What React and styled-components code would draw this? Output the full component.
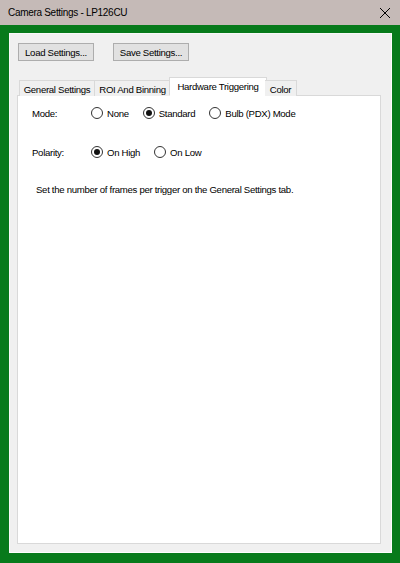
import styled, { createGlobalStyle } from 'styled-components';

const Global = createGlobalStyle`
  html, body {
    margin: 0;
    padding: 0;
    background: #f0f0f0;
  }
  body {
    font-family: 'Liberation Sans', Arial, sans-serif;
    font-size: 9.6px;
    letter-spacing: -0.3px;
    color: #000;
  }
`;

const Window = styled.div`
  width: 400px;
  height: 563px;
  display: flex;
  flex-direction: column;
`;

const TitleBar = styled.div`
  height: 25px;
  background: #c5bab7;
  display: flex;
  align-items: center;
  justify-content: space-between;
  padding: 0 9px 0 8px;
  font-size: 10px;
  letter-spacing: -0.3px;
`;

const Close = styled.span`
  display: flex;
  width: 12px;
  height: 12px;
`;

const Frame = styled.div`
  flex: 1;
  background: #077a1b;
  padding: 8px 8px 10px 9px;
  display: flex;
`;

const Client = styled.div`
  flex: 1;
  background: #f0f0f0;
  border-top: 1px solid #f8f8f8;
  border-left: 1px solid #f8f8f8;
  border-right: 1px solid #fdfdfd;
  border-bottom: 1px solid #fdfdfd;
  display: flex;
  flex-direction: column;
  padding: 9px 10px 8px 7px;
`;

const ButtonRow = styled.div`
  display: flex;
  gap: 19px;
  padding-left: 1px;
`;

const Button = styled.button`
  width: 76px;
  height: 18px;
  padding: 0;
  border: 1px solid #adadad;
  background: #e1e1e1;
  font: inherit;
  letter-spacing: inherit;
  color: #000;
  white-space: nowrap;
`;

const Tabs = styled.div`
  margin-top: 16px;
  flex: 1;
  display: flex;
  flex-direction: column;
`;

const TabList = styled.div`
  display: flex;
  align-items: flex-end;
  padding-left: 2px;
  height: 19px;
  position: relative;
  z-index: 1;
`;

const Tab = styled.div`
  height: ${(p) => (p.$active ? '19px' : '16px')};
  width: ${(p) => p.$w}px;
  box-sizing: border-box;
  border: 1px solid #d9d9d9;
  border-bottom: ${(p) => (p.$active ? '1px solid #fff' : 'none')};
  border-left: ${(p) => (p.$first || p.$active ? '1px solid #d9d9d9' : 'none')};
  background: ${(p) => (p.$active ? '#fff' : '#f0f0f0')};
  display: flex;
  align-items: center;
  justify-content: center;
  margin: ${(p) => (p.$active ? '0 -2px 0 -2px' : '0')};
  white-space: nowrap;
  padding-top: ${(p) => (p.$active ? '0' : '1px')};
`;

const Panel = styled.div`
  flex: 1;
  background: #fff;
  border: 1px solid #d9d9d9;
  margin-top: -1px;
  padding: 8px 0 0 14px;
`;

const Row = styled.div`
  display: flex;
  align-items: center;
  height: 18px;
  margin-bottom: ${(p) => p.$mb || 0}px;
`;

const Label = styled.span`
  width: 59px;
`;

const Option = styled.label`
  display: flex;
  align-items: center;
  gap: 4px;
  margin-right: ${(p) => p.$mr}px;
`;

const Radio = styled.span`
  box-sizing: border-box;
  width: 12px;
  height: 12px;
  border-radius: 50%;
  border: 1px solid #333;
  display: flex;
  align-items: center;
  justify-content: center;
  &::after {
    content: '';
    width: 6px;
    height: 6px;
    border-radius: 50%;
    background: ${(p) => (p.$on ? '#111' : 'transparent')};
  }
`;

const Note = styled.p`
  margin: 0;
  padding-left: 4px;
  line-height: 12px;
`;

export default function App() {
  return (
    <Window>
      <Global />
      <TitleBar>
        <span>Camera Settings - LP126CU</span>
        <Close>
          <svg width="12" height="12" viewBox="0 0 12 12">
            <path d="M1 1 L11 11 M11 1 L1 11" stroke="#000" strokeWidth="1" />
          </svg>
        </Close>
      </TitleBar>
      <Frame>
        <Client>
          <ButtonRow>
            <Button>Load Settings...</Button>
            <Button>Save Settings...</Button>
          </ButtonRow>
          <Tabs>
            <TabList>
              <Tab $first $w={76}>General Settings</Tab>
              <Tab $w={76}>ROI And Binning</Tab>
              <Tab $active $w={98}>Hardware Triggering</Tab>
              <Tab $w={32}>Color</Tab>
            </TabList>
            <Panel>
              <Row $mb={21}>
                <Label>Mode:</Label>
                <Option $mr={14}>
                  <Radio />
                  None
                </Option>
                <Option $mr={14}>
                  <Radio $on />
                  Standard
                </Option>
                <Option>
                  <Radio />
                  Bulb (PDX) Mode
                </Option>
              </Row>
              <Row $mb={23}>
                <Label>Polarity:</Label>
                <Option $mr={14}>
                  <Radio $on />
                  On High
                </Option>
                <Option>
                  <Radio />
                  On Low
                </Option>
              </Row>
              <Note>Set the number of frames per trigger on the General Settings tab.</Note>
            </Panel>
          </Tabs>
        </Client>
      </Frame>
    </Window>
  );
}
